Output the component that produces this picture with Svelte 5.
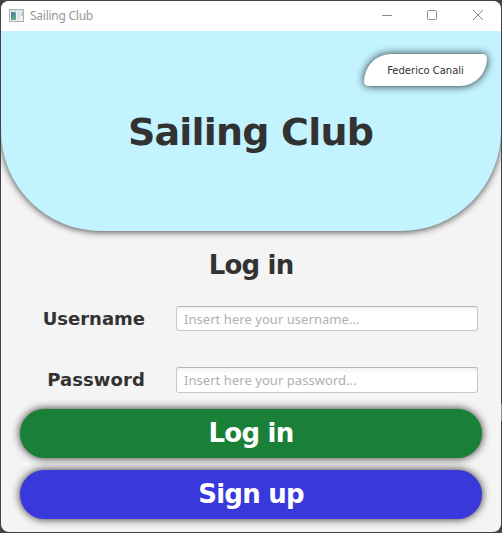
<script>
  let username = $state('');
  let password = $state('');
</script>

<div class="desktop">
  <main class="window">
    <header class="titlebar">
      <svg class="appicon" width="15" height="13" viewBox="0 0 15 13">
        <rect x=".5" y=".5" width="14" height="12" fill="#eef0f1" stroke="#a9b0b5" />
        <path d="M1 1.2h13" stroke="#c3c9cd" />
        <rect x="2" y="3" width="5" height="8" fill="#5f9b9c" />
        <path d="M2 3h3v3l-3 3z" fill="#55839d" />
        <path d="M3 11l4-5v5z" fill="#5cab88" />
        <rect x="8" y="3" width="3" height="8" fill="#dde2e5" />
        <rect x="12" y="3" width="2" height="4" fill="#b5d5c8" />
      </svg>
      <span class="caption">Sailing Club</span>
      <svg class="controls" width="104" height="12" viewBox="0 0 104 12" fill="none" stroke="#8b8b8b">
        <path d="M0 6.5h10" />
        <rect x="45.5" y="1.5" width="9" height="9" rx="1" />
        <path d="M91 1l10 10M101 1L91 11" />
      </svg>
    </header>

    <section class="hero">
      <div class="author">Federico Canali</div>
      <h1>Sailing Club</h1>
    </section>

    <h2>Log in</h2>

    <form onsubmit={(e) => e.preventDefault()}>
      <div class="row">
        <label for="username">Username</label>
        <input id="username" type="text" placeholder="Insert here your username..." bind:value={username} />
      </div>
      <div class="row second">
        <label class="wide" for="password">Password</label>
        <input id="password" type="password" placeholder="Insert here your password..." bind:value={password} />
      </div>
      <button class="login" type="submit"><span>Log in</span></button>
      <button class="signup" type="button"><span>Sign up</span></button>
    </form>
  </main>
</div>

<style>
  * {
    box-sizing: border-box;
  }
  .desktop {
    width: 502px;
    height: 533px;
    padding: 1px;
    background: linear-gradient(#8a8a8a, #8a8a8a) 501px 404px / 1px 17px no-repeat #444244;
    font-family: Verdana, 'DejaVu Sans', sans-serif;
    color: #323232;
  }
  .window {
    display: flex;
    flex-direction: column;
    width: 500px;
    height: 531px;
    overflow: hidden;
    border-radius: 8px;
    background: #f4f4f4;
  }
  .titlebar {
    display: flex;
    flex: none;
    align-items: center;
    height: 30px;
    padding: 0 15px 0 8px;
    background: #fff;
  }
  .appicon {
    margin-top: -2px;
  }
  .caption {
    margin-left: 6px;
    font: 12px/16px 'Noto Sans', sans-serif;
    letter-spacing: -0.25px;
    color: #979797;
  }
  .controls {
    margin-left: auto;
    margin-top: -2px;
  }
  .hero {
    flex: none;
    height: 200px;
    padding-top: 23px;
    border-radius: 0 0 100px 100px;
    background: #c3f3ff;
    box-shadow: 0 1px 7px rgba(0, 0, 0, 0.72);
    clip-path: inset(0 0 -20px 0);
  }
  .author {
    width: 123px;
    height: 32px;
    margin-left: 363px;
    border-radius: 30px 5px 30px 5px;
    background: #fff;
    box-shadow: 0 0 8px rgba(0, 0, 0, 0.85);
    font-size: 10px;
    line-height: 33px;
    text-align: center;
    letter-spacing: 0;
  }
  h1 {
    margin: 22px 0 0;
    font-size: 38px;
    line-height: 48px;
    text-align: center;
    letter-spacing: -0.8px;
    text-indent: -1px;
  }
  h2 {
    flex: none;
    margin: 18px 0 0;
    font-size: 26px;
    line-height: 32px;
    text-align: center;
    letter-spacing: -0.8px;
  }
  form {
    display: flex;
    flex-direction: column;
    padding: 25px 19px 0 19px;
  }
  .row {
    display: flex;
    align-items: center;
    height: 25px;
  }
  .row.second {
    height: 26px;
    margin-top: 36px;
  }
  label {
    width: 125px;
    margin-right: 31px;
    font-size: 18px;
    font-weight: bold;
    line-height: 24px;
    text-align: right;
  }
  .wide {
    letter-spacing: 0.1px;
  }
  input {
    width: 302px;
    height: 100%;
    padding: 0 7px;
    border: 1px solid #c8c8c8;
    border-top-color: #b5b5b5;
    border-radius: 3px;
    outline: none;
    background: linear-gradient(#f3f3f3, #fff 5px);
    font: 13px 'Noto Sans', sans-serif;
    letter-spacing: 0.05px;
    color: #323232;
  }
  input::placeholder {
    color: #b0b0b0;
    opacity: 1;
  }
  button {
    height: 49px;
    padding: 0;
    border: 0;
    border-radius: 25px;
    box-shadow: 0 0 8px rgba(0, 0, 0, 0.85);
    font: bold 26px/49px Verdana, 'DejaVu Sans', sans-serif;
    letter-spacing: -0.75px;
    color: #fff;
  }
  .login {
    margin-top: 16px;
    background: #1b8037;
  }
  .signup {
    margin-top: 12px;
    background: #3838db;
  }
</style>
